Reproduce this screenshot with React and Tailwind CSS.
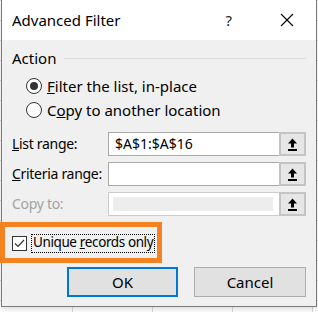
import React from 'react';

// Excel "Advanced Filter" dialog sitting over a worksheet, with an orange
// annotation box drawn round the "Unique records only" checkbox.

const font = { fontFamily: '"Noto Sans", "Open Sans", sans-serif' };

const RefButton = () => (
  <button
    type="button"
    className="w-[27px] h-[24px] -ml-px flex items-center justify-center border-2 border-[#c4c4c4] bg-[#e6e6e6]"
  >
    <svg width="11" height="13" viewBox="0 0 11 13" aria-hidden="true">
      <path d="M5.5 0.5 L10 5.5 L7 5.5 L7 9.5 L4 9.5 L4 5.5 L1 5.5 Z" fill="#000" />
      <rect x="1" y="11" width="9" height="2" fill="#000" />
    </svg>
  </button>
);

const Radio = ({ checked, children }) => (
  <div className="flex items-center h-[20px] pl-[14px]">
    <span className="w-[16px] h-[16px] rounded-full border border-[#333] bg-white flex items-center justify-center">
      {checked && <span className="w-[8px] h-[8px] rounded-full bg-[#333]" />}
    </span>
    <span className="ml-[5px] text-[15px] leading-none text-black whitespace-nowrap">{children}</span>
  </div>
);

const RangeRow = ({ label, value, disabled }) => (
  <div className="flex items-center h-[24px]">
    <span className={`w-[96px] shrink-0 whitespace-nowrap text-[14px] tracking-[-0.3px] leading-none ${disabled ? 'text-[#a3a3a3]' : 'text-black'}`}>{label}</span>
    {disabled ? (
      <div className="flex-1 h-full border border-[#cccccc] bg-white p-[4px]">
        <div className="h-full w-[160px] bg-[#ededed]" />
      </div>
    ) : (
      <div className="flex-1 h-full border border-[#a8a8a8] bg-white flex items-center px-[6px] text-[14px] leading-none text-black">
        {value}
      </div>
    )}
    <RefButton />
  </div>
);

export default function App() {
  return (
    <div
      className="relative w-[318px] h-[312px] overflow-hidden bg-white bg-[linear-gradient(to_right,#d9d9d9_1px,transparent_1px),linear-gradient(to_bottom,#d9d9d9_1px,transparent_1px)] bg-[length:80px_20px] bg-[position:72px_0px]"
      style={font}
    >
      <div className="ml-[1px] w-[316px] h-[307px] border border-[#7a7a7a] border-t-0 bg-[#f0f0f0] flex flex-col shadow-[0_2px_6px_rgba(0,0,0,0.15)]">
        {/* title bar */}
        <div className="h-[40px] bg-white flex items-center pl-[10px] pr-[22px]">
          <span className="text-[15px] text-black">Advanced Filter</span>
          <span className="ml-auto text-[15px] text-[#222]">?</span>
          <svg className="ml-[48px]" width="14" height="14" viewBox="0 0 14 14" aria-hidden="true">
            <path d="M1 1 L13 13 M13 1 L1 13" stroke="#000" strokeWidth="1.1" />
          </svg>
        </div>

        <div className="flex-1 flex flex-col px-[10px]">
          {/* Action group */}
          <div className="flex items-center h-[18px] mt-[9px]">
            <span className="text-[15px] leading-none text-black">Action</span>
            <div className="flex-1 ml-[8px] h-px bg-[#dcdcdc]" />
          </div>
          <div className="mt-[9px] flex flex-col gap-[4px]">
            <Radio checked><u>F</u>ilter the list, in-place</Radio>
            <Radio>C<u>o</u>py to another location</Radio>
          </div>

          {/* ranges */}
          <div className="mt-[12px] flex flex-col gap-[6px]">
            <RangeRow label={<><u>L</u>ist range:</>} value="$A$1:$A$16" />
            <RangeRow label={<><u>C</u>riteria range:</>} value="" />
            <RangeRow label="Copy to:" disabled />
          </div>

          {/* checkbox */}
          <div className="mt-[17px] flex items-center h-[20px]">
            <span className="w-[15px] h-[15px] border border-[#333] bg-white flex items-center justify-center">
              <svg width="11" height="9" viewBox="0 0 11 9" aria-hidden="true">
                <path d="M1 4.5 L4 7.5 L10 1" fill="none" stroke="#333" strokeWidth="1.2" />
              </svg>
            </span>
            <span className="ml-[4px] px-[1px] h-[19px] flex items-center border border-dotted border-black text-[13.5px] tracking-[-0.4px] leading-none text-black whitespace-nowrap">
              Unique&nbsp;<u>r</u>ecords only
            </span>
          </div>

          {/* buttons */}
          <div className="mt-[14px] flex justify-end gap-[16px]">
            <button type="button" className="w-[111px] h-[30px] border-2 border-[#0078d7] bg-[#e1e1e1] text-[15px] text-black">
              OK
            </button>
            <button type="button" className="w-[112px] h-[30px] border border-[#adadad] bg-[#e1e1e1] text-[15px] text-black">
              Cancel
            </button>
          </div>
        </div>
      </div>

      {/* annotation */}
      <div className="absolute left-0 top-[222px] w-[162px] h-[41px] border-[5px] border-[#f58220] pointer-events-none" />
    </div>
  );
}
